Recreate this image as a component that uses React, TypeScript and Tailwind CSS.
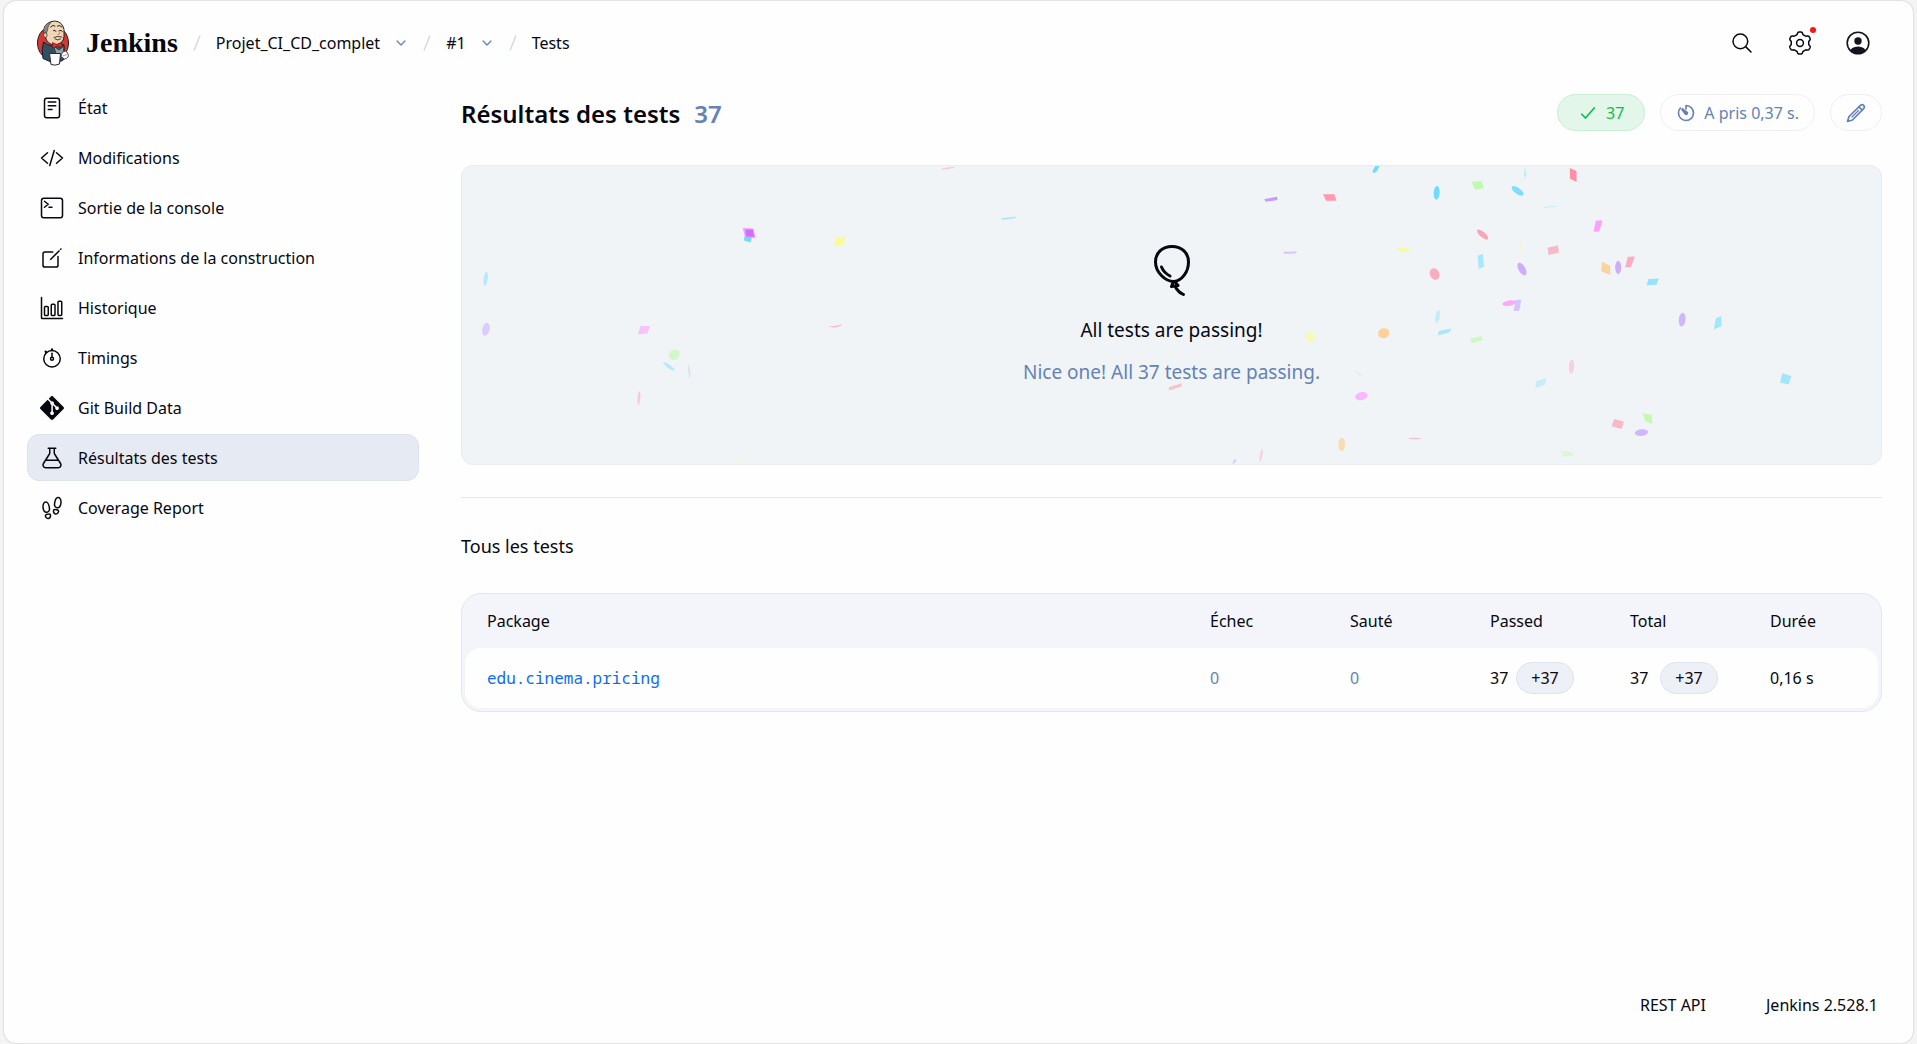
import type { ComponentType, ReactNode } from "react";
import {
  IoBarChartOutline,
  IoCheckmark,
  IoChevronDown,
  IoCodeSlashOutline,
  IoCreateOutline,
  IoFlaskOutline,
  IoFootstepsOutline,
  IoReaderOutline,
  IoSearchOutline,
  IoStopwatchOutline,
  IoTerminalOutline,
  IoTimerOutline,
} from "react-icons/io5";
import { SiGit } from "react-icons/si";

type Icon = ComponentType<{ className?: string }>;

const NAV: { label: string; icon: Icon; active?: boolean }[] = [
  { label: "État", icon: IoReaderOutline },
  { label: "Modifications", icon: IoCodeSlashOutline },
  { label: "Sortie de la console", icon: IoTerminalOutline },
  { label: "Informations de la construction", icon: IoCreateOutline },
  { label: "Historique", icon: IoBarChartOutline },
  { label: "Timings", icon: IoStopwatchOutline },
  { label: "Git Build Data", icon: SiGit },
  { label: "Résultats des tests", icon: IoFlaskOutline, active: true },
  { label: "Coverage Report", icon: IoFootstepsOutline },
];

function JenkinsLogo() {
  return (
    <svg viewBox="0 0 64 92" className="h-[46px] w-8" aria-hidden="true">
      <ellipse cx="32" cy="46" rx="31" ry="34" fill="#d33833" stroke="#2b1b1b" strokeWidth="2" />
      <path d="M13 44 Q30 58 44 46 L54 50 L55 78 Q46 86 28 84 L12 77 Q8 60 13 44Z" fill="#335061" stroke="#13202a" strokeWidth="2" />
      <path d="M14 20 Q16 4 35 2 Q51 3 54 19 L54 33 Q53 44 43 48 Q32 53 23 45 Q15 38 14 20Z" fill="#f0d6b7" stroke="#2b2320" strokeWidth="2" />
      <path d="M14 27 Q11 11 23 6 L28 4 Q21 12 21 20 L19 26 Q16 25 15 30Z" fill="#8b8680" stroke="#4b4744" strokeWidth="1.5" />
      <path d="M14 27 Q20 23 20 31 Q19 38 15 34" fill="#f0d6b7" stroke="#2b2320" strokeWidth="1.5" />
      <path d="M27 14 Q32 8 36 12 M41 12 Q46 9 50 14 M33 21 Q37 19 38 23 M45 21 Q48 19 51 23" fill="none" stroke="#2b2320" strokeWidth="2" strokeLinecap="round" />
      <path d="M43 21 Q48 30 41 29" fill="none" stroke="#8a6b50" strokeWidth="1.5" />
      <path d="M34 35 Q41 31 50 34 M36 38 Q42 42 47 38" fill="none" stroke="#4b3a30" strokeWidth="2" strokeLinecap="round" />
      <path d="M33 52 L44 60 L54 52 L52 70 L38 67Z" fill="#8fa3ae" stroke="#2b2b2b" strokeWidth="1.5" />
      <path d="M31 45 L40 49 L49 45 L50 55 L41 52 L31 56Z" fill="#d33833" stroke="#7a1512" strokeWidth="1.5" />
      <path d="M25 67 H47 L45 88 Q36 92 28 89Z" fill="#ffffff" stroke="#2b2b2b" strokeWidth="2" />
      <path d="M50 66 Q58 58 62 68 Q65 76 55 78 L48 73Z" fill="#ffffff" stroke="#55504c" strokeWidth="2" />
      <path d="M51 72 L60 69" stroke="#8a8580" strokeWidth="1.5" />
    </svg>
  );
}

function Balloon() {
  return (
    <svg viewBox="0 0 36 52" className="h-[52px] w-9" fill="none" stroke="#07070f" strokeWidth="3" strokeLinecap="round" strokeLinejoin="round" aria-hidden="true">
      <path d="M18 2.500 C8 2.500 1.500 9 1.500 18 C1.500 28 11 37.500 20 37.500 C28 36.500 34.500 28 34.500 18 C34.500 9 28 2.500 18 2.500Z" />
      <path d="M7.500 23 Q10 29 16 32" />
      <path d="M19 38.500 L17.500 42.500 L24 41.500 L21.500 38.500 M21.500 43 Q24 48 29.500 50.500" />
    </svg>
  );
}

/* Outline of a cog with six soft teeth. */
const GEAR_PATH =
  Array.from({ length: 120 }, (_, step) => {
    const angle = (step / 120) * Math.PI * 2;
    const radius = 9.9 + 1.2 * Math.tanh(2.2 * Math.cos(6 * angle));
    const x = 12 + radius * Math.sin(angle);
    const y = 12 - radius * Math.cos(angle);
    return `${step === 0 ? "M" : "L"}${x.toFixed(2)} ${y.toFixed(2)}`;
  }).join(" ") + "Z";

function Gear() {
  return (
    <svg viewBox="0 0 24 24" className="size-6" fill="none" stroke="currentColor" strokeWidth="1.500" strokeLinejoin="round" aria-hidden="true">
      <path d={GEAR_PATH} />
      <circle cx="12" cy="12" r="3.400" />
    </svg>
  );
}

function PersonCircle() {
  return (
    <svg viewBox="0 0 24 24" className="size-6" aria-hidden="true">
      <clipPath id="avatar-clip">
        <circle cx="12" cy="12" r="11" />
      </clipPath>
      <circle cx="12" cy="12" r="10.8" fill="none" stroke="#14141f" strokeWidth="1.600" />
      <circle cx="12" cy="10" r="3.700" fill="#14141f" />
      <ellipse cx="12" cy="21" rx="8" ry="5.600" fill="#14141f" clipPath="url(#avatar-clip)" />
    </svg>
  );
}

function Pencil() {
  return (
    <svg viewBox="0 0 20 20" className="size-5" fill="none" stroke="currentColor" strokeWidth="1.700" strokeLinecap="round" strokeLinejoin="round" aria-hidden="true">
      <path d="M1.500 18.500 L3 13.500 L14.200 2.600 C15.400 1.400 16.800 1.600 17.600 2.400 C18.400 3.200 18.600 4.600 17.400 5.800 L6.500 17 Z" />
      <path d="M13 4 L16 7" />
      <path d="M6 14 L12.500 7.500" strokeWidth="1.200" />
    </svg>
  );
}

const RED = "#ff8fa6";
const SKY = "#6fdcff";
const PURPLE = "#c39bff";
const PINK = "#ff8fff";
const GREEN = "#b4fb9a";
const YELLOW = "#fbff6e";
const ORANGE = "#ffc370";

type Dot = [cx: number, cy: number, rx: number, ry: number, angle: number, color: string, opacity: number];
type Quad = [points: string, color: string, opacity: number];

/* Confetti, in thirds of a pixel; each cluster has its own origin. */
const CLUSTERS: { x: number; dots: Dot[]; quads: Quad[] }[] = [
  {
    x: -66,
    dots: [
      [137, 386, 6, 21, 8, SKY, 0.45],
      [138, 538, 11, 20, 12, PURPLE, 0.45],
      [703, 615, 17, 15, -25, GREEN, 0.5],
      [687, 650, 21, 5, 37, SKY, 0.45],
      [748, 665, 3, 21, -6, PURPLE, 0.25],
      [597, 746, 4, 21, 4, RED, 0.4],
    ],
    quads: [
      ["913,258 937,258 932,276 913,270", SKY, 1],
      ["909,232 941,234 947,263 915,258", PINK, 0.9],
      ["917,237 939,237 943,259 919,258", "#cb70fb", 1],
      ["1187,263 1217,258 1211,284 1183,288", YELLOW, 0.7],
      ["602,528 631,528 622,551 594,553", PINK, 0.5],
      ["1162,529 1185,528 1205,524 1203,528 1185,533", RED, 0.6],
      ["890,933 920,933 917,936 893,937", YELLOW, 0.2],
    ],
  },
  {
    x: 1434,
    dots: [
      [1492, 126, 9, 21, 4, SKY, 1],
      [1310, 53, 6, 15, 32, SKY, 1],
      [1486, 371, 14, 18, -25, RED, 0.7],
      [1112, 561, 15, 17, 0, YELLOW, 0.45],
      [1333, 550, 17, 15, -20, ORANGE, 0.7],
      [1266, 740, 19, 12, -15, PINK, 0.6],
      [1207, 886, 10, 20, 0, ORANGE, 0.5],
      [1495, 500, 6, 20, 10, SKY, 0.35],
      [1258, 672, 16, 2, 42, ORANGE, 0.25],
      [965, 919, 4, 20, 10, RED, 0.3],
      [1426, 868, 20, 2, 0, RED, 0.5],
      [885, 937, 4, 8, 30, PURPLE, 0.4],
    ],
    quads: [
      ["1318,48 1332,48 1326,53 1320,53", YELLOW, 0.6],
      ["975,145 1013,138 1014,148 978,153", PURPLE, 1],
      ["1151,130 1185,130 1191,150 1160,150", RED, 0.9],
      ["1031,304 1073,303 1069,309 1035,311", PURPLE, 0.5],
      ["1373,292 1407,295 1415,305 1383,303", YELLOW, 0.7],
      ["186,203 228,198 228,202 186,207", SKY, 0.65],
      ["688,713 726,701 726,711 688,723", RED, 0.5],
      ["5,53 25,49 45,48 45,50 25,54 6,56", RED, 0.4],
    ],
  },
  {
    x: 2904,
    dots: [
      [265, 120, 21, 9, 36, SKY, 0.9],
      [160, 252, 21, 8, 40, RED, 0.8],
      [278, 356, 10, 21, -30, PURPLE, 0.8],
      [567, 351, 9, 20, 0, PURPLE, 0.8],
      [759, 509, 10, 21, 6, PURPLE, 0.7],
      [240, 459, 21, 8, -10, PINK, 0.75],
      [427, 651, 8, 21, 4, RED, 0.35],
      [637, 850, 20, 10, -6, PURPLE, 0.7],
      [277, 286, 3, 20, 5, YELLOW, 0.35],
    ],
    quads: [
      ["127,93 157,90 164,112 138,116", GREEN, 0.8],
      ["422,51 442,60 442,93 422,83", RED, 1],
      ["288,48 291,70 286,84 284,70", SKY, 0.4],
      ["343,169 382,165 383,167 346,171", SKY, 0.4],
      ["500,210 520,209 510,243 493,243", PINK, 0.85],
      ["355,292 386,285 389,306 358,314", RED, 0.6],
      ["145,316 161,311 164,349 148,356", SKY, 0.55],
      ["518,334 543,346 543,374 516,363", ORANGE, 0.65],
      ["596,319 617,318 605,350 588,351", RED, 0.7],
      ["658,386 689,385 682,404 652,405", SKY, 0.7],
      ["260,450 276,449 270,482 253,483", PURPLE, 0.55],
      ["860,505 877,499 877,529 854,539", SKY, 0.6],
      ["29,543 66,536 60,548 25,557", SKY, 0.55],
      ["123,566 157,559 160,571 127,580", GREEN, 0.6],
      ["322,694 352,686 347,706 318,716", SKY, 0.3],
      ["1060,671 1087,679 1079,705 1053,699", SKY, 0.6],
      ["555,809 584,817 577,839 547,831", RED, 0.6],
      ["641,792 667,796 670,824 648,816", GREEN, 0.75],
      ["393,906 425,907 436,921 402,922", GREEN, 0.35],
    ],
  },
];

function Confetti() {
  return (
    <svg viewBox="0 0 4260 900" className="pointer-events-none absolute inset-0 size-full" preserveAspectRatio="none" aria-hidden="true">
      {CLUSTERS.map((cluster) => (
        <g key={cluster.x} transform={`translate(${cluster.x} -45)`}>
          {cluster.dots.map(([cx, cy, rx, ry, angle, color, opacity]) => (
            <ellipse key={`${cx}-${cy}`} cx={cx} cy={cy} rx={rx} ry={ry} fill={color} opacity={opacity} transform={`rotate(${angle} ${cx} ${cy})`} />
          ))}
          {cluster.quads.map(([points, color, opacity]) => (
            <polygon key={points} points={points} fill={color} opacity={opacity} />
          ))}
        </g>
      ))}
    </svg>
  );
}

function Slash() {
  return (
    <svg viewBox="0 0 8 16" className="h-4 w-2 shrink-0" aria-hidden="true">
      <path d="M7 0.500 L1 15.500" stroke="#d3dbea" strokeWidth="1.500" />
    </svg>
  );
}

function Crumb({ children, menu }: { children: string; menu?: boolean }) {
  return (
    <span className="flex items-center gap-3.5">
      <a href="#">{children}</a>
      {menu && (
        <button type="button" aria-label={`Menu de ${children}`} className="text-[#6482b4]">
          <IoChevronDown className="size-3.5" />
        </button>
      )}
    </span>
  );
}

function Header() {
  return (
    <header className="flex h-[83px] items-center justify-between pr-[43px] pl-[33px]">
      <nav aria-label="Fil d'Ariane" className="flex items-center gap-[15px] text-base">
        <a href="#" className="flex items-center gap-[17px]">
          <JenkinsLogo />
          <span className="font-['Liberation_Serif',serif] text-[28px] leading-8 font-bold text-[#07070f]">Jenkins</span>
        </a>
        <Slash />
        <Crumb menu>Projet_CI_CD_complet</Crumb>
        <Slash />
        <Crumb menu>#1</Crumb>
        <Slash />
        <Crumb>Tests</Crumb>
      </nav>
      <div className="flex items-center gap-[34px]">
        <button type="button" aria-label="Rechercher">
          <IoSearchOutline className="size-6" />
        </button>
        <button type="button" aria-label="Administrer Jenkins" className="relative">
          <Gear />
          <span className="absolute -top-1 -right-1 size-1.5 rounded-full bg-[#ff1414]" />
        </button>
        <button type="button" aria-label="Compte">
          <PersonCircle />
        </button>
      </div>
    </header>
  );
}

function Sidebar() {
  return (
    <nav aria-label="Construction" className="flex w-[392px] shrink-0 flex-col gap-[3px]">
      {NAV.map(({ label, icon: NavIcon, active }) => (
        <a
          key={label}
          href="#"
          aria-current={active ? "page" : undefined}
          className={
            active
              ? "flex h-[47px] items-center gap-3.5 rounded-xl border border-[#dce2ee] bg-[#e6eaf2] px-3"
              : "flex h-[47px] items-center gap-3.5 rounded-xl border border-transparent px-3"
          }
        >
          <NavIcon className="size-6" />
          {label}
        </a>
      ))}
    </nav>
  );
}

function Chip({ children }: { children: ReactNode }) {
  return (
    <span className="flex h-8 items-center rounded-full border border-[#dde3ef] bg-[#edf0f6] px-3.5">{children}</span>
  );
}

function ResultsTable() {
  return (
    <div className="rounded-[20px] border border-[#e2e6ef] bg-[#f3f5fa] px-[3px] pb-[3px]">
      <table className="w-full table-fixed border-separate border-spacing-0 text-left">
        <thead>
          <tr className="h-[54px]">
            <th scope="col" className="pl-[22px] font-normal">Package</th>
            <th scope="col" className="w-[140px] font-normal">Échec</th>
            <th scope="col" className="w-[140px] font-normal">Sauté</th>
            <th scope="col" className="w-[140px] font-normal">Passed</th>
            <th scope="col" className="w-[140px] font-normal">Total</th>
            <th scope="col" className="w-[108px] font-normal">Durée</th>
          </tr>
        </thead>
        <tbody>
          <tr className="h-[60px]">
            <td className="rounded-l-2xl bg-[#fefefe] pl-[22px]">
              <a href="#" className="font-['Noto_Sans_Mono','DejaVu_Sans_Mono',monospace] text-base text-[#0a6cf5]">
                edu.cinema.pricing
              </a>
            </td>
            <td className="bg-[#fefefe] text-[#6482b4]">0</td>
            <td className="bg-[#fefefe] text-[#6482b4]">0</td>
            <td className="bg-[#fefefe]">
              <div className="flex items-center gap-2">
                37
                <Chip>+37</Chip>
              </div>
            </td>
            <td className="bg-[#fefefe]">
              <div className="flex items-center gap-3">
                37
                <Chip>+37</Chip>
              </div>
            </td>
            <td className="rounded-r-2xl bg-[#fefefe]">0,16 s</td>
          </tr>
        </tbody>
      </table>
    </div>
  );
}

function Results() {
  return (
    <main className="min-w-0 flex-1">
      <div className="flex items-center justify-between pt-2.5">
        <h1 className="flex items-center gap-3.5 pt-0.5 text-2xl font-semibold text-[#07070f]">
          Résultats des tests
          <span className="text-[#6482b4]">37</span>
        </h1>
        <div className="flex items-center gap-[15px]">
          <span className="flex h-[37px] items-center gap-2 rounded-full border border-[#c8eed6] bg-[#e3f6ea] px-5 text-[#0cc04a]">
            <IoCheckmark className="size-5 [&_path]:[stroke-width:44px]" />
            37
          </span>
          <span className="flex h-[37px] items-center gap-2 rounded-full border border-[#eef0f7] px-[15px] text-[#6482b4]">
            <IoTimerOutline className="size-5 [&_path]:[stroke-width:42px]" />
            A pris 0,37 s.
          </span>
          <button type="button" aria-label="Modifier la description" className="flex h-[37px] w-[52px] items-center justify-center rounded-full border border-[#eef0f7] text-[#6482b4]">
            <Pencil />
          </button>
        </div>
      </div>

      <section className="relative mt-[34px] flex h-[300px] flex-col items-center justify-center overflow-hidden rounded-xl border border-[#e8ecf1] bg-[#f0f4f7]">
        <Confetti />
        <Balloon />
        <p className="mt-5 text-[19px] leading-7 text-[#07070f]">All tests are passing!</p>
        <p className="mt-3.5 text-[19px] leading-7 text-[#6482b4]">Nice one! All 37 tests are passing.</p>
      </section>

      <hr className="mt-8 border-[#e4e8f0]" />
      <h2 className="mt-[34px] mb-[33px] text-lg leading-7">Tous les tests</h2>
      <ResultsTable />
    </main>
  );
}

export default function App() {
  return (
    <div className="min-h-screen bg-[#f4f4f4] pt-px pr-1 pb-px pl-1 font-['Noto_Sans','Open_Sans',sans-serif] text-base text-[#07070f]">
      <div className="flex min-h-[calc(100vh-2px)] flex-col rounded-xl bg-[#fefefe] shadow-[0_0_2px_rgba(0,0,0,0.25)]">
        <Header />
        <div className="flex flex-1 gap-[42px] pr-[31px] pl-[23px]">
          <Sidebar />
          <Results />
        </div>
        <footer className="flex justify-end gap-[60px] pr-[35px] pb-[26px]">
          <a href="#">REST API</a>
          <a href="#">Jenkins 2.528.1</a>
        </footer>
      </div>
    </div>
  );
}
